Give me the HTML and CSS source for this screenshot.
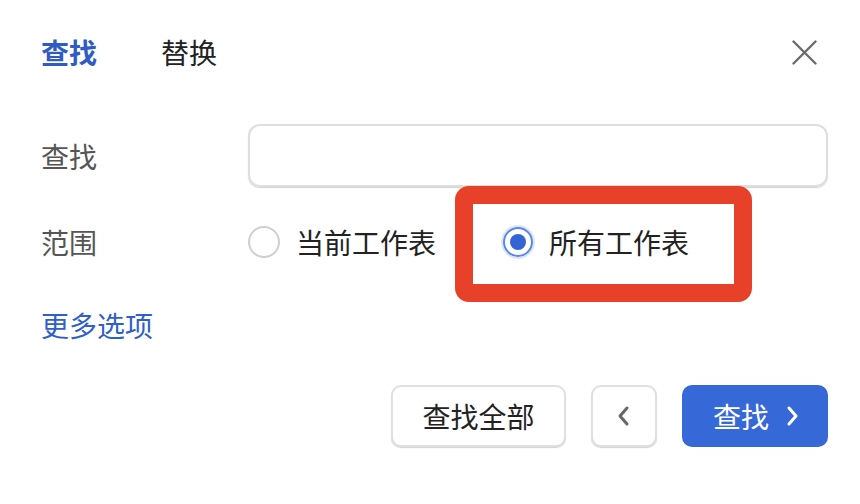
FILE: index.html
```html
<!DOCTYPE html>
<html lang="zh">
<head>
<meta charset="utf-8">
<link rel="stylesheet" href="styles.css">
</head>
<body>
<div class="dialog">
  <div class="header">
    <div class="tabs">
      <span class="tab active">查找</span>
      <span class="tab">替换</span>
    </div>
    <svg class="close" width="25" height="25" viewBox="0 0 25 25"><path d="M1.5 1.5L23.5 23.5M23.5 1.5L1.5 23.5" stroke="#6b6b6b" stroke-width="2.4" stroke-linecap="round"/></svg>
  </div>
  <div class="row row-find">
    <span class="label">查找</span>
    <div class="input"></div>
  </div>
  <div class="row row-scope">
    <span class="label">范围</span>
    <div class="radios">
      <span class="radio"><span class="circle"></span><span class="rtext">当前工作表</span></span>
      <span class="radio checked"><span class="circle"><span class="dot"></span></span><span class="rtext">所有工作表</span></span>
    </div>
  </div>
  <div class="row row-more">
    <span class="more">更多选项</span>
  </div>
  <div class="footer">
    <button class="btn btn-all">查找全部</button>
    <button class="btn btn-prev"><svg width="14" height="22" viewBox="0 0 14 22"><path d="M10 3L3 11L10 19" fill="none" stroke="#666" stroke-width="3" stroke-linecap="round" stroke-linejoin="round"/></svg></button>
    <button class="btn btn-next">查找<svg width="14" height="22" viewBox="0 0 14 22"><path d="M4 3L11 11L4 19" fill="none" stroke="#fff" stroke-width="3" stroke-linecap="round" stroke-linejoin="round"/></svg></button>
  </div>
  <div class="highlight"></div>
</div>
</body>
</html>
```

FILE: styles.css
```css
* { box-sizing: border-box; }
html, body { margin: 0; padding: 0; background: #fff; }
body {
  font-family: "Noto Sans CJK SC", "Noto Sans", sans-serif;
  font-size: 28px;
  color: #222;
  width: 860px;
  height: 504px;
  overflow: hidden;
}
.dialog {
  position: relative;
  padding: 0 32px 0 41px;
  height: 504px;
}
.header {
  height: 104px;
  display: flex;
  align-items: center;
  justify-content: space-between;
}
.tabs { display: flex; gap: 64px; line-height: 1; }
.tab { color: #222; }
.tab.active { color: #2f5cc2; font-weight: 700; }
.close { margin-right: 11px; }
.row { display: flex; align-items: center; }
.label { width: 207px; color: #555; flex: none; line-height: 1; }
.row-find { margin-top: 20px; height: 63px; }
.input {
  flex: 1;
  height: 63px;
  border: 2px solid #dedede;
  border-radius: 12px;
  box-shadow: 0 1px 1px rgba(0,0,0,0.18);
}
.row-scope { height: 110px; }
.radios { display: flex; align-items: center; gap: 67px; }
.radio { display: flex; align-items: center; gap: 16px; line-height: 1; }
.circle {
  width: 32px; height: 32px;
  border: 2px solid #cfcfcf;
  border-radius: 50%;
  display: flex; align-items: center; justify-content: center;
}
.radio.checked .circle {
  border: 2px solid #5a86e6;
  box-shadow: 0 0 0 2px #dde7fb;
  width: 30px; height: 30px;
}
.dot { width: 16px; height: 16px; border-radius: 50%; background: #3565d5; }
.rtext { color: #222; }
.row-more { height: 56px; }
.more { color: #2f5fc7; line-height: 1; }
.footer {
  margin-top: 32px;
  display: flex;
  justify-content: flex-end;
  gap: 25px;
}
.btn {
  font-family: inherit;
  font-size: 28px;
  height: 62px;
  border-radius: 10px;
  border: 2px solid #e0e0e0;
  background: #fff;
  color: #222;
  box-shadow: 0 1px 1px rgba(0,0,0,0.18);
  display: flex; align-items: center; justify-content: center;
  padding: 0;
  line-height: 1;
}
.btn-all { width: 175px; }
.btn-prev { width: 66px; }
.btn-next {
  width: 146px;
  background: #3668d8;
  border-color: #3668d8;
  color: #fff;
  box-shadow: none;
  gap: 16px;
  padding-left: 2px;
}
.highlight {
  position: absolute;
  left: 455px;
  top: 186px;
  width: 297px;
  height: 116px;
  border: 18px solid #e8412a;
  border-radius: 14px;
}
```
